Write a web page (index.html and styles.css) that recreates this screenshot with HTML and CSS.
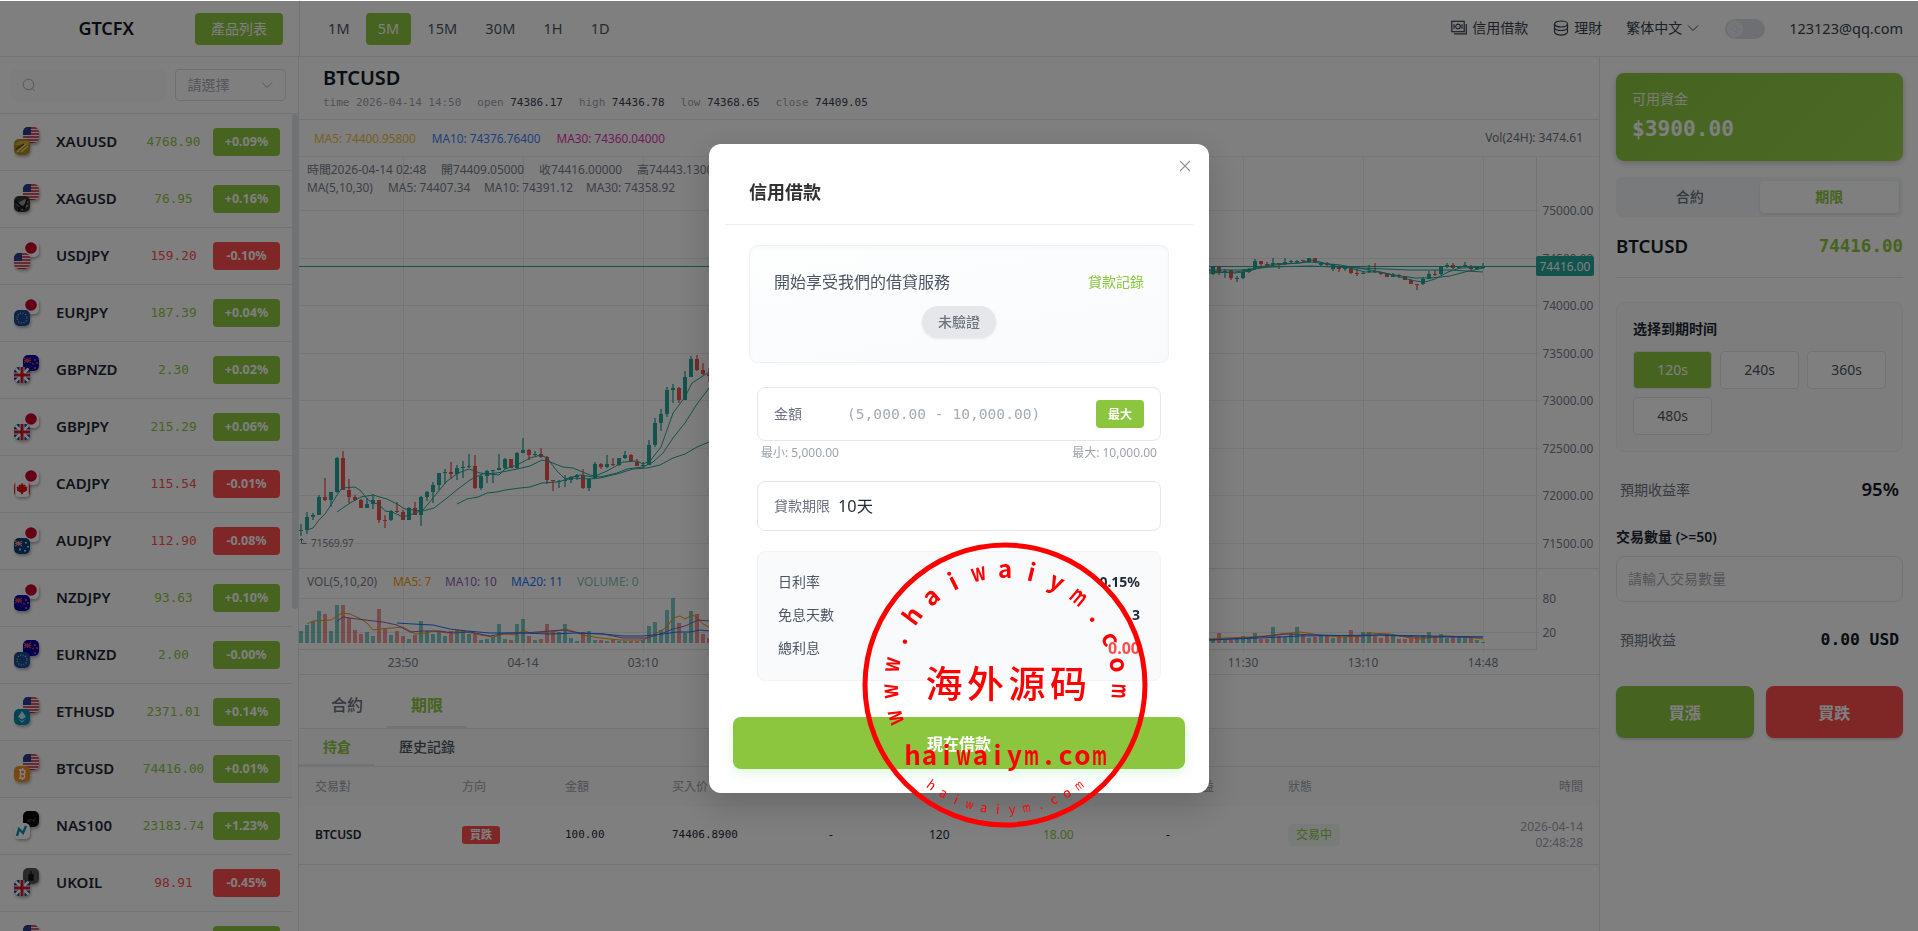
FILE: index.html
```
<!DOCTYPE html>
<html lang="zh-Hant">
<head>
    <meta charset="UTF-8">
    <meta name="viewport" content="width=device-width, initial-scale=1.0">
    <title>GTCFX</title>
    <link rel="stylesheet" href="styles.css">
</head>
<body>
    <svg class="defs" width="0" height="0">
        <symbol id="us" viewBox="0 0 16 16"><rect width="16" height="16" fill="#eee"/><path d="M0 1h16M0 4h16M0 7h16M0 10h16M0 13h16M0 15.6h16" stroke="#c8203c" stroke-width="1.4"/><rect width="8" height="8" fill="#2b3c8c"/></symbol>
        <symbol id="jp" viewBox="0 0 16 16"><rect width="16" height="16" fill="#fff"/><circle cx="8" cy="7" r="5.8" fill="#c8002c"/></symbol>
        <symbol id="eu" viewBox="0 0 16 16"><rect width="16" height="16" fill="#164a9c"/><circle cx="8" cy="8" r="5" fill="none" stroke="#e0cf30" stroke-width="1.1" stroke-dasharray="1 1.62"/></symbol>
        <symbol id="nz" viewBox="0 0 16 16"><rect width="16" height="16" fill="#00009c"/><path d="M1 3l7 5M8 3L1 8M4.5 3v5M1 5.5h7" stroke="#d43a5c" stroke-width="1.2"/><path d="M12 4v2M10 8v1.500M14 7v2M12 12v2" stroke="#e04060" stroke-width="1.6"/></symbol>
        <symbol id="au" viewBox="0 0 16 16"><rect width="16" height="16" fill="#06407c"/><path d="M1 3l7 5M8 3L1 8M4.500 3v5M1 5.500h7" stroke="#e58a9a" stroke-width="1.2"/><path d="M12 4v1.500M14 8v1.500M6 10.500v2M11 12v1.500" stroke="#fff" stroke-width="1.5"/></symbol>
        <symbol id="gb" viewBox="0 0 16 16"><rect width="16" height="16" fill="#0c3284"/><path d="M0 0l16 16M16 0L0 16" stroke="#fff" stroke-width="2.6"/><path d="M8 0v16M0 8h16" stroke="#fff" stroke-width="5"/><path d="M8 0v16M0 8h16" stroke="#d0142c" stroke-width="3"/></symbol>
        <symbol id="ca" viewBox="0 0 16 16"><rect width="16" height="16" fill="#fff"/><path d="M.5 0v16M15.500 0v16" stroke="#d22" stroke-width="1.500"/><path d="M8 2.500l1.500 2 1.500-.500-.300 2.500 2.300-.500-.800 2 .800 1-3.500 2H8.400V13h-.8v-2H6.500L3 9l.8-1-.8-2 2.300.500L5 4l1.500.500z" fill="#e01010" stroke="#e01010"/></symbol>
        <symbol id="gold" viewBox="0 0 16 16"><rect width="16" height="16" fill="#b08a20"/><path d="M0 6l6-4h9v4z" fill="#cfae48"/><path d="M3 13l9-8M7 13l7-6" stroke="#f3e08a" stroke-width="1.2"/><path d="M2 10l8-5" stroke="#5c4300" stroke-width="1.4"/></symbol>
        <symbol id="silver" viewBox="0 0 16 16"><rect width="16" height="16" fill="#333"/><path d="M2 8l9-5 4 3-9 5z" fill="#999"/><path d="M8 14l6-5" stroke="#aaa" stroke-width="1.500"/><path d="M1 5l9 8 3-9M5 11v4" stroke="#111" stroke-width="1.800" fill="none"/></symbol>
        <symbol id="eth" viewBox="0 0 16 16"><rect width="16" height="16" fill="#0b84ad"/><path d="M8 2l4 6-4 2.500L4 8z" fill="#bfeaf5"/><path d="M4 9.400L8 12l4-2.600L8 14z" fill="#8fd6ea"/></symbol>
        <symbol id="btc" viewBox="0 0 16 16"><rect width="16" height="16" fill="#f2901c"/><path d="M6.500 3v10M5 4h4a2 2 0 0 1 0 4H6.500M9 8a2.200 2.200 0 0 1 0 4.300H5M8.500 2v2M8.500 12v2" stroke="#fff" stroke-width="1.500" fill="none"/></symbol>
        <symbol id="nas" viewBox="0 0 16 16"><rect width="16" height="16" fill="#080808"/><path d="M4 9l2 2 2-3 2 2 3-3" stroke="#7c2020" stroke-width="1" fill="none"/><path d="M6 8v3M11 8v3" stroke="#1f6b40" stroke-width="1"/></symbol>
        <symbol id="ndx" viewBox="0 0 16 16"><rect width="16" height="16" fill="#fff"/><path d="M3 13l2-7 4 4 3-7" stroke="#0a8db5" stroke-width="2.400" fill="none"/></symbol>
        <symbol id="oil" viewBox="0 0 16 16"><rect width="16" height="16" fill="#555"/><path d="M8 3v8M6 7h4v5H6z" fill="#111" stroke="#111" stroke-width="1.300"/></symbol>
    </svg>

    <header class="topbar">
        <div class="brand">
            <span class="logo">GTCFX</span>
            <button class="btn-list">產品列表</button>
        </div>
        <nav class="periods">
            <a>1M</a><a class="active">5M</a><a>15M</a><a>30M</a><a>1H</a><a>1D</a>
        </nav>
        <div class="user-menu">
            <a class="link-loan"><svg width="16" height="16" viewBox="0 0 16 16" fill="none" stroke="currentColor" stroke-width="1.200"><rect x=".8" y="1.300" width="12.400" height="10.400"/><circle cx="7" cy="6.500" r="2.300"/><path d="M3 13.900h12.300V4M3 4.200v4.600M11 4.200v4.600"/></svg>信用借款</a>
            <a class="link-fund"><svg width="16" height="16" viewBox="0 0 16 16" fill="none" stroke="currentColor" stroke-width="1.200"><ellipse cx="8" cy="4" rx="6.500" ry="3"/><path d="M1.500 4v3.500c0 1.700 3 3 6.500 3s6.500-1.300 6.500-3V4M1.500 7.500v4.200c0 1.900 3 3.400 6.500 3.400s6.500-1.500 6.500-3.400V7.500"/></svg>理財</a>
            <a class="link-lang">繁体中文<svg width="12" height="12" viewBox="0 0 12 12" fill="none" stroke="currentColor"><path d="M1 3.500l5 5 5-5"/></svg></a>
            <span class="toggle"><i><svg width="12" height="12" viewBox="0 0 12 12" fill="none" stroke="#dcdfe6"><circle cx="6" cy="6" r="2.500"/><path d="M6 0v2M6 10v2M0 6h2M10 6h2M2 2l1 1M9 9l1 1M10 2L9 3M3 9l-1 1"/></svg></i></span>
            <a class="mail">123123@qq.com</a>
        </div>
    </header>

    <div class="layout">
        <aside class="sidebar">
            <div class="filters">
                <div class="search"><svg width="14" height="14" viewBox="0 0 14 14" fill="none" stroke="#a8abb2"><circle cx="6.500" cy="6.500" r="5.300"/><path d="M10.500 10.500l2 2"/></svg></div>
                <div class="select">請選擇<svg width="12" height="12" viewBox="0 0 12 12" fill="none" stroke="#a8abb2"><path d="M1 3.500l5 5 5-5"/></svg></div>
            </div>
            <div class="quotes">
                <div class="rows" id="rows"></div>
                <div class="thumb"></div>
            </div>
        </aside>

        <main class="main">
            <section class="title-box">
                <h1>BTCUSD</h1>
                <p><span>time 2026-04-14 14:50</span><span>open <b>74386.17</b></span><span>high <b>74436.78</b></span><span>low <b>74368.65</b></span><span>close <b>74409.05</b></span></p>
            </section>
            <section class="ma-bar">
                <span class="ma5">MA5: 74400.95800</span>
                <span class="ma10">MA10: 74376.76400</span>
                <span class="ma30">MA30: 74360.04000</span>
                <span class="vol24">Vol(24H): 3474.61</span>
            </section>
            <svg class="chart" id="chart" width="1300" height="517" viewBox="-1 0 1300 517"></svg>
            <section class="orders">
                <div class="tabs"><a>合約</a><a class="active">期限</a></div>
                <div class="subtabs"><a class="active">持倉</a><a>歷史記錄</a></div>
                <table>
                    <colgroup><col class="c1"><col class="c2"><col class="c3"><col class="c4"><col class="c5"><col class="c6"><col class="c7"><col class="c8"><col class="c9"></colgroup>
                    <thead>
                        <tr><th>交易對</th><th>方向</th><th>金額</th><th>买入价</th><th></th><th></th><th></th><th>實際收益</th><th>狀態</th><th class="right">時間</th></tr>
                    </thead>
                    <tbody>
                        <tr>
                            <td class="symbol">BTCUSD</td>
                            <td><span class="tag-sell">買跌</span></td>
                            <td class="num">100.00</td>
                            <td class="num">74406.8900</td>
                            <td>-</td>
                            <td>120</td>
                            <td class="green">18.00</td>
                            <td>-</td>
                            <td><span class="tag-live">交易中</span></td>
                            <td class="right time">2026-04-14<br>02:48:28</td>
                        </tr>
                    </tbody>
                </table>
            </section>
        </main>

        <aside class="trade">
            <div class="balance"><span>可用資金</span><strong>$3900.00</strong></div>
            <div class="switch"><a>合約</a><a class="active">期限</a></div>
            <div class="pair"><span>BTCUSD</span><strong>74416.00</strong></div>
            <div class="expiry">
                <h4>选择到期时间</h4>
                <div class="times"><a class="active">120s</a><a>240s</a><a>360s</a><a>480s</a></div>
            </div>
            <div class="line rate"><span>預期收益率</span><strong>95%</strong></div>
            <h4 class="amount-label">交易數量 (&gt;=50)</h4>
            <div class="amount">請輸入交易數量</div>
            <div class="line profit"><span>預期收益</span><strong>0.00 USD</strong></div>
            <div class="actions"><button class="buy-up">買漲</button><button class="buy-down">買跌</button></div>
        </aside>
    </div>

    <div class="overlay">
        <div class="modal">
            <svg class="close" width="12" height="12" viewBox="0 0 12 12" stroke="#909399" stroke-width="1.100"><path d="M1 1l10 10M11 1L1 11"/></svg>
            <h2>信用借款</h2>
            <div class="intro">
                <div class="intro-top"><span>開始享受我們的借貸服務</span><a>貸款記錄</a></div>
                <span class="pill">未驗證</span>
            </div>
            <div class="field money"><label>金額</label><span class="hint">(5,000.00 - 10,000.00)</span><button>最大</button></div>
            <div class="limits"><span>最小: 5,000.00</span><span>最大: 10,000.00</span></div>
            <div class="field term"><label>貸款期限</label><span>10天</span></div>
            <div class="summary">
                <p><span>日利率</span><b>0.15%</b></p>
                <p><span>免息天數</span><b>3</b></p>
                <p><span>總利息</span><b class="red">0.00</b></p>
            </div>
            <button class="submit">現在借款</button>
        </div>
    </div>

    <svg class="stamp" id="stamp" width="286" height="286" viewBox="-143 -143 286 286">
        <circle r="140" fill="none" stroke="red" stroke-width="5"/>
    </svg>

    <script src="app.js"></script>
</body>
</html>
```
FILE: styles.css
```
* {
    box-sizing: border-box;
}
body {
    margin: 0;
    height: 931px;
    overflow: hidden;
    background: #fff;
    color: #1f2937;
    font-family: "Noto Sans", "Noto Sans CJK TC", sans-serif;
    font-size: 14px;
    line-height: 20px;
}
h1, h2, h4, p {
    margin: 0;
}
button {
    border: 0;
    font-family: inherit;
    color: #fff;
    padding: 0;
}
.defs {
    display: block;
}
/* header */
.topbar {
    display: flex;
    height: 57px;
    border-bottom: 1px solid #e5e7eb;
}
.brand {
    width: 300px;
    border-right: 1px solid #e5e7eb;
    display: flex;
    align-items: center;
    justify-content: flex-end;
    padding: 1px 16px 0 0;
}
.logo {
    font-size: 18px;
    font-weight: 600;
    margin: -2px 61px 0 0;
    color: #111827;
}
.btn-list {
    width: 88px;
    height: 32px;
    border-radius: 4px;
    background: #8cc63f;
    font-size: 14px;
    line-height: 30px;
}
.periods {
    display: flex;
    align-items: center;
    gap: 4px;
    padding: 1px 0 0 16px;
    color: #4b5563;
    font-size: 14.5px;
}
.periods a {
    padding: 5px 12px 7px;
    border-radius: 4px;
    letter-spacing: 0.1px;
}
.periods .active {
    background: #8cc63f;
    color: #fff;
}
.user-menu {
    margin-left: auto;
    padding: 0 15px 0 0;
    display: flex;
    align-items: center;
    color: #374151;
}
.user-menu a {
    display: flex;
    align-items: center;
    gap: 5px;
}
.link-fund {
    margin-left: 25px;
}
.link-lang {
    margin-left: 24px;
}
.toggle {
    width: 40px;
    height: 20px;
    border-radius: 10px;
    background: #dcdfe6;
    margin: 2px 24px 0 26px;
    padding: 2px;
}
.toggle i {
    display: flex;
    width: 16px;
    height: 16px;
    border-radius: 50%;
    background: #eceef2;
    align-items: center;
    justify-content: center;
}
.mail {
    font-size: 14.5px;
}
.layout {
    display: flex;
    height: 874px;
}
/* sidebar */
.sidebar {
    width: 299px;
    border-right: 1px solid #e5e7eb;
}
.filters {
    height: 57px;
    border-bottom: 1px solid #e5e7eb;
    display: flex;
    align-items: center;
    padding: 0 12px 0 11px;
    gap: 8px;
}
.search {
    width: 157px;
    height: 32px;
    background: #f8fbf9;
    border-radius: 6px;
    padding: 9px 11px;
    line-height: 0;
}
.select {
    width: 111px;
    height: 32px;
    border: 1px solid #dcdfe6;
    border-radius: 4px;
    display: flex;
    align-items: center;
    justify-content: space-between;
    padding: 0 12px 0 11px;
    color: #a8abb2;
}
.quotes {
    display: flex;
    height: 817px;
    overflow: hidden;
}
.rows {
    width: 292px;
}
.thumb {
    width: 6px;
    height: 495px;
    border-radius: 3px;
    background: #e3e5e9;
}
.row {
    height: 57px;
    border-bottom: 1px solid #e5e7eb;
    display: grid;
    grid-template-columns: 42px 78px 79px 67px;
    padding-left: 14px;
    align-items: center;
}
.row.active {
    background: #f8fbf9;
}
.coins {
    position: relative;
    width: 28px;
    height: 30px;
}
.coins svg {
    position: absolute;
    border-radius: 5px;
    box-shadow: 1px 2px 3px rgba(0, 0, 0, 0.3);
}
.coins .back {
    left: 9px;
    top: 0;
}
.coins .front {
    left: 0;
    top: 12px;
}
.name {
    margin-top: -2px;
    font-size: 15px;
    font-weight: 600;
}
.price {
    text-align: center;
    font-family: "DejaVu Sans Mono", monospace;
    font-size: 12.8px;
    color: #8cc63f;
}
.price.down {
    color: #ff4d4f;
}
.pct {
    height: 28px;
    border-radius: 4px;
    background: #8cc63f;
    color: #fff;
    font-size: 12.5px;
    font-weight: 700;
    line-height: 27px;
    text-align: center;
}
.pct.down {
    background: #ff4d4f;
}
/* main column */
.main {
    width: 1300px;
}
.title-box {
    height: 63px;
    border-bottom: 1px solid #e5e7eb;
    padding: 9px 0 0 24px;
}
.title-box h1 {
    font-size: 20px;
    line-height: 24px;
    font-weight: 600;
    color: #111827;
}
.title-box p {
    display: flex;
    gap: 16px;
    margin-top: 3px;
    font-family: "DejaVu Sans Mono", monospace;
    font-size: 10.95px;
    color: #9ca3af;
}
.title-box b {
    font-weight: 400;
    color: #374151;
}
.ma-bar {
    height: 37px;
    border-bottom: 1px solid #f0f1f3;
    display: flex;
    align-items: center;
    gap: 16px;
    padding: 0 16px 0 15px;
    font-size: 11.8px;
    color: #6b7280;
}
.ma5 {
    color: #f0c040;
}
.ma10 {
    color: #3b82f6;
}
.ma30 {
    color: #e033b0;
}
.vol24 {
    margin-left: auto;
    font-size: 12px;
}
.chart {
    display: block;
    font-size: 11.9px;
}
.orders {
    border-top: 1px solid #e5e7eb;
}
.tabs {
    height: 54px;
    border-bottom: 1px solid #e5e7eb;
    display: flex;
    padding-left: 8px;
    font-size: 16px;
    font-weight: 500;
    color: #6b7280;
}
.tabs a {
    width: 80px;
    text-align: center;
    line-height: 60px;
}
.tabs .active {
    color: #8cc63f;
    font-weight: 700;
    border-bottom: 2px solid #e5e7eb;
}
.subtabs {
    height: 38px;
    border-bottom: 1px solid #e5e7eb;
    background: #f8fbf9;
    display: flex;
    font-weight: 500;
    color: #4b5563;
}
.subtabs a {
    padding: 0 24px;
    line-height: 36px;
}
.subtabs .active {
    color: #8cc63f;
    font-weight: 700;
    border-bottom: 2px solid #e5e7eb;
}
table {
    width: 1300px;
    table-layout: fixed;
    border-collapse: collapse;
    font-size: 12px;
}
th {
    height: 40px;
    background: #f8fbf9;
    font-weight: 400;
    text-align: left;
    color: #9ca3af;
}
th, td {
    padding: 0;
}
td {
    height: 57px;
    border-bottom: 1px solid #e5e7eb;
    line-height: 16px;
}
th:first-child, td:first-child {
    padding-left: 16px;
}
.c1 { width: 163px; }
.c2 { width: 103px; }
.c3 { width: 107px; }
.c4 { width: 157px; }
.c5 { width: 100px; }
.c6 { width: 114px; }
.c7 { width: 123px; }
.c8 { width: 122px; }
.c9 { width: 140px; }
th.right, td.right {
    text-align: right;
    padding-right: 16px;
}
.symbol {
    font-weight: 600;
}
.num {
    font-family: "DejaVu Sans Mono", monospace;
    font-size: 10.95px;
}
.green {
    color: #8cc63f;
}
.time {
    color: #9ca3af;
}
.tag-sell {
    display: inline-block;
    width: 38px;
    height: 18px;
    border-radius: 3px;
    background: #ff4d4f;
    color: #fff;
    font-size: 11px;
    font-weight: 700;
    line-height: 18px;
    text-align: center;
}
.tag-live {
    display: inline-block;
    padding: 3px 8px;
    border-radius: 4px;
    background: #eff9f3;
    color: #8cc63f;
}
/* right column */
.trade {
    width: 319px;
    border-left: 1px solid #e5e7eb;
    padding: 16px 15px 0 16px;
}
.balance {
    height: 88px;
    border-radius: 8px;
    background: linear-gradient(135deg, #8cc63f, #9ad24c);
    box-shadow: 0 2px 6px rgba(0, 0, 0, 0.2);
    padding: 16px;
    color: #fff;
    display: flex;
    flex-direction: column;
    gap: 10px;
}
.balance strong {
    font-family: "DejaVu Sans Mono", monospace;
    font-size: 21.2px;
}
.balance span {
    opacity: 0.9;
}
.switch {
    margin-top: 16px;
    height: 40px;
    padding: 4px;
    border-radius: 6px;
    background: #f0f4f9;
    display: flex;
    text-align: center;
    line-height: 32px;
    font-weight: 500;
    color: #6b7280;
}
.switch a {
    flex: 1;
}
.switch .active {
    background: #fff;
    color: #8cc63f;
    font-weight: 700;
    border-radius: 4px;
    box-shadow: 0 1px 3px rgba(0, 0, 0, 0.1);
}
.pair {
    height: 61px;
    border-bottom: 1px solid #e5e7eb;
    display: flex;
    justify-content: space-between;
    padding-top: 19px;
    font-size: 18.6px;
    font-weight: 600;
    color: #111827;
}
.pair strong {
    font-family: "DejaVu Sans Mono", monospace;
    font-size: 17.5px;
    color: #8cc63f;
}
.expiry {
    margin-top: 24px;
    height: 150px;
    border: 1px solid #f0f2f4;
    border-radius: 8px;
    background: #f8fbf9;
    padding: 16px;
}
h4 {
    font-size: 14px;
    font-weight: 600;
}
.times {
    display: grid;
    grid-template-columns: repeat(3, 1fr);
    gap: 8px;
    margin-top: 12px;
}
.times a {
    height: 38px;
    border: 1px solid #e5e7eb;
    border-radius: 4px;
    background: #fff;
    text-align: center;
    line-height: 36px;
    color: #4b5563;
}
.times .active {
    background: #8cc63f;
    color: #fff;
}
.line {
    display: flex;
    justify-content: space-between;
    padding: 0 4px;
    color: #6b7280;
}
.line strong {
    color: #111827;
}
.rate {
    margin-top: 28px;
}
.rate strong {
    margin-top: -1px;
    font-size: 18.6px;
    font-weight: 600;
}
.amount-label {
    margin-top: 27px;
}
.amount {
    margin-top: 9px;
    height: 46px;
    border: 1px solid #e5e7eb;
    border-radius: 8px;
    padding-left: 11px;
    line-height: 44px;
    color: #a8abb2;
}
.profit {
    margin-top: 28px;
}
.profit strong {
    font-family: "DejaVu Sans Mono", monospace;
    font-size: 16.3px;
}
.actions {
    margin-top: 36px;
    display: flex;
    gap: 12px;
}
.actions button {
    flex: 1;
    height: 52px;
    border-radius: 8px;
    font-size: 16px;
    font-weight: 700;
    box-shadow: 0 2px 3px rgba(0, 0, 0, 0.15);
}
.buy-up {
    background: #8cc63f;
}
.buy-down {
    background: #ff4d4f;
}
/* loan dialog */
.overlay {
    position: fixed;
    inset: 1px 0 0 0;
    background: rgba(0, 0, 0, 0.5);
}
.modal {
    position: relative;
    width: 500px;
    height: 649px;
    margin: 143px 0 0 709px;
    padding: 16px;
    border-radius: 12px;
    background: #fff;
    box-shadow: 0 12px 32px 4px rgba(0, 0, 0, 0.15);
}
.close {
    position: absolute;
    top: 16px;
    right: 18px;
}
.modal h2 {
    height: 65px;
    border-bottom: 1px solid #ebedf0;
    padding: 20px 0 0 24px;
    font-size: 18px;
    line-height: 24px;
    color: #303133;
}
.intro {
    height: 118px;
    margin: 20px 24px 0;
    padding: 24px 24px 0;
    border: 1px solid #eff1f4;
    border-radius: 8px;
    background: linear-gradient(170deg, #fdfefe, #f9fafc);
    box-shadow: inset 0 2px 4px rgba(0, 0, 0, 0.03);
    text-align: center;
}
.intro-top {
    display: flex;
    justify-content: space-between;
    line-height: 24px;
    font-size: 16px;
    color: #4b5563;
}
.intro-top a {
    font-size: 14px;
    color: #8cc63f;
}
.pill {
    display: inline-block;
    margin-top: 12px;
    padding: 0 16px;
    border-radius: 16px;
    background: #e5e7eb;
    box-shadow: 0 1px 3px rgba(0, 0, 0, 0.08);
    line-height: 32px;
    font-weight: 500;
    color: #6b7280;
}
.field {
    margin: 0 32px;
    border: 1px solid #e5e7eb;
    border-radius: 8px;
    padding: 0 16px;
    display: flex;
    align-items: center;
    color: #6b7280;
}
.money {
    margin-top: 24px;
    height: 54px;
}
.hint {
    margin-left: 45px;
    font-family: "DejaVu Sans Mono", monospace;
    font-size: 14.6px;
    color: #a3abb8;
}
.money button {
    margin-left: auto;
    width: 48px;
    height: 28px;
    border-radius: 4px;
    background: #8cc63f;
    font-size: 12px;
    font-weight: 700;
}
.limits {
    display: flex;
    justify-content: space-between;
    margin: 2px 36px 0;
    font-size: 12px;
    color: #9ca3af;
}
.term {
    margin-top: 18px;
    height: 50px;
}
.term span {
    margin-left: 8px;
    font-size: 16.3px;
    color: #1f2937;
}
.summary {
    height: 130px;
    margin: 20px 32px 0;
    padding: 20px 20px 0;
    border: 1px solid #f1f3f5;
    border-radius: 8px;
    background: #f9fafc;
    color: #4b5563;
}
.summary p {
    display: flex;
    justify-content: space-between;
    margin-bottom: 13px;
}
.summary b {
    font-weight: 700;
    color: #1f2937;
}
.summary .red {
    color: #ff4d4f;
    font-size: 16px;
}
.submit {
    display: block;
    width: 452px;
    height: 52px;
    margin: 36px 0 0 8px;
    border-radius: 8px;
    background: #8cc63f;
    box-shadow: 0 4px 12px rgba(140, 230, 150, 0.3);
    font-size: 16px;
    font-weight: 700;
}
/* round site seal, over everything */
.stamp {
    position: fixed;
    left: 861.5px;
    top: 541.5px;
    font-family: "Noto Sans CJK SC", sans-serif;
    fill: red;
}
```
FILE: app.js
```
// name, price, change, down?, back icon, front icon
const quotes = [
    ["XAUUSD", "4768.90", "+0.09%", 0, "us", "gold"],
    ["XAGUSD", "76.95", "+0.16%", 0, "us", "silver"],
    ["USDJPY", "159.20", "-0.10%", 1, "jp", "us"],
    ["EURJPY", "187.39", "+0.04%", 0, "jp", "eu"],
    ["GBPNZD", "2.30", "+0.02%", 0, "nz", "gb"],
    ["GBPJPY", "215.29", "+0.06%", 0, "jp", "gb"],
    ["CADJPY", "115.54", "-0.01%", 1, "jp", "ca"],
    ["AUDJPY", "112.90", "-0.08%", 1, "jp", "au"],
    ["NZDJPY", "93.63", "+0.10%", 0, "jp", "nz"],
    ["EURNZD", "2.00", "-0.00%", 0, "nz", "eu"],
    ["ETHUSD", "2371.01", "+0.14%", 0, "us", "eth"],
    ["BTCUSD", "74416.00", "+0.01%", 0, "us", "btc"],
    ["NAS100", "23183.74", "+1.23%", 0, "nas", "ndx"],
    ["UKOIL", "98.91", "-0.45%", 1, "oil", "gb"],
    ["", "", "", 0, "us", "eu"]
];
document.getElementById("rows").innerHTML = quotes.map(q => {
    const down = q[3] ? " down" : "";
    return `<div class="row${q[0] === "BTCUSD" ? " active" : ""}">
        <div class="coins"><svg class="back" width="16" height="16"><use href="#${q[4]}"/></svg><svg class="front" width="16" height="16"><use href="#${q[5]}"/></svg></div>
        <div class="name">${q[0]}</div><div class="price${down}">${q[1]}</div><div class="pct${down}">${q[2]}</div></div>`;
}).join("");

// candles: high, body top, body bottom, low, down?, volume
const left = [
    [367,373,374,379,0,12],[355,360,373,377,0,18],[356,358,360,363,0,22],[338,340,358,358,0,32],[321,340,343,344,1,29],
    [335,335,343,350,0,12],[300,301,335,336,0,38],[294,301,333,333,1,38],[322,333,340,346,1,25],[338,340,343,344,1,13],
    [342,343,351,351,1,9],[341,347,351,351,0,11],[337,343,347,352,0,7],[343,343,363,366,1,34],[358,363,364,371,1,15],
    [353,354,363,364,0,8],[345,354,355,356,1,12],[353,355,363,363,1,7],[350,351,363,363,0,4],[345,351,358,358,1,8],
    [339,340,358,369,0,22],[334,335,340,344,0,12],[325,328,335,346,0,9],[316,316,328,333,0,12],[312,315,316,327,0,7],
    [305,315,317,322,1,12],[308,311,317,323,0,13],[304,310,311,321,0,12],[297,309,310,311,0,9],[298,309,331,332,1,9],
    [317,319,331,333,0,3],[313,314,319,326,0,4],[313,313,314,326,0,6],[297,311,313,313,0,19],[301,302,311,312,0,4],
    [302,302,311,311,1,3],[295,296,311,312,0,19],[281,293,296,296,0,24],[292,293,298,303,1,7],[294,297,298,299,0,3],
    [291,297,300,301,1,4],[299,300,323,327,1,19],[323,323,324,334,1,13],[323,324,325,331,0,11],[318,323,324,330,0,19],
    [319,320,323,326,0,5],[317,318,320,323,0,2],[312,318,331,332,1,11],[321,322,331,334,0,12],[305,307,322,322,0,3],
    [306,307,310,312,1,3],[298,307,310,311,0,2],[301,307,308,309,1,3],[301,301,308,309,0,2],[294,298,301,302,0,2],
    [297,298,304,305,1,2],[302,305,309,309,1,2],[305,308,309,311,0,3],[283,288,308,308,0,17],[261,266,288,290,0,21],
    [252,257,266,274,0,13],[230,233,257,260,0,33],[227,231,233,246,0,45],[230,231,243,246,1,20],[214,220,243,243,0,10],
    [199,202,220,220,0,32],[198,202,213,214,1,29],[206,213,217,218,1,9],[211,217,219,225,1,5]
];
const right = [
    [109,109,117,118,0,3],[110,110,116,118,1,10],[112,114,115,121,0,3],[113,113,121,123,1,3],[119,121,122,125,0,5],
    [113,115,121,122,0,7],[111,112,115,116,0,4],[102,104,112,113,0,10],[104,104,107,109,1,4],[105,107,108,109,1,4],
    [101,106,107,109,0,16],[106,106,107,112,1,7],[101,105,107,108,0,6],[103,104,105,107,0,10],[103,104,105,106,0,16],
    [103,103,104,105,1,9],[101,101,105,106,0,5],[101,101,105,106,1,6],[105,106,108,110,0,8],[105,106,108,110,1,7],
    [107,107,112,114,0,5],[108,110,112,115,1,7],[110,110,112,114,0,6],[109,111,116,117,1,13],[112,116,117,119,1,7],
    [115,116,117,117,0,11],[108,114,115,116,0,11],[106,114,115,116,1,7],[115,115,117,118,1,5],[116,116,120,120,1,9],
    [116,118,120,120,0,8],[117,118,119,121,1,4],[119,119,123,123,1,4],[122,123,127,127,1,5],[127,127,128,133,1,6],
    [120,122,127,128,0,8],[114,117,122,122,0,11],[113,117,118,119,1,7],[109,110,117,118,0,9],[106,108,109,111,0,5],
    [106,108,111,112,1,6],[109,110,111,112,0,6],[105,108,109,110,0,6],[108,109,112,114,1,5],[109,110,112,113,0,3],[106,110,111,112,0,1]
];
const lines = [
    ["#26a69a", "7,373 13,371 19,363 25,357 31,348 37,338 42,331 55,330 61,334 67,342 73,346 79,347 85,354 92,355 103,360 115,356 123,353 133,341 146,325 158,316 169,312 180,316 199,318 205,312 217,308 230,301 241,298 247,301 257,314 265,322 280,318 293,320 307,314 323,305 337,304 343,307 350,304 361,290 373,256 385,240 392,226 403,219 409,215"],
    ["#26a69a", "37,355 50,346 61,340 73,338 87,342 97,347 105,352 123,354 134,351 147,341 158,332 170,323 182,317 197,316 217,312 230,309 242,303 250,305 263,310 273,311 290,318 300,320 317,316 327,312 343,310 353,305 363,296 373,281 385,266 397,247 409,231"],
    ["#26a69a", "157,347 167,342 178,340 187,336 197,335 205,333 220,331 230,330 242,326 257,325 273,321 290,322 300,321 317,317 333,312 347,311 360,308 373,301 385,297 397,290 409,285"],
    ["#26a69a", "909,114 935,116 950,114 960,110 975,107 1000,106 1011,103 1020,105 1035,109 1050,111 1065,115 1080,115 1100,120 1115,124 1125,125 1135,122 1148,115 1160,111 1183,110"],
    ["#26a69a", "909,116 935,115 955,112 975,108 1010,105 1040,108 1070,113 1095,118 1115,121 1130,121 1150,119 1165,115 1183,111"],
    ["#26a69a", "909,113 940,113 970,110 1010,109 1060,111 1110,113 1150,113 1183,115"],
    ["#ff9600", "7,467 13,464 31,463 42,456 50,457 61,462 67,466 73,473 80,472 103,470 115,477 127,476 133,474 147,476 160,474 172,476 180,478 193,480 203,477 217,478 223,473 230,476 253,475 265,472 273,474 283,478 300,481 320,483 343,483 353,478 362,473 367,470 373,461 380,459 385,462 392,458 397,460 403,467 409,470"],
    ["#935ebd", "37,464 43,460 57,462 83,465 97,468 110,475 123,474 140,474 153,476 170,475 190,479 207,476 223,476 250,474 263,473 280,476 303,477 323,481 347,481 363,476 373,472 385,469 398,463 409,464"],
    ["#1677ff", "97,466 113,467 133,468 150,472 167,474 190,476 223,476 250,477 277,476 303,477 323,479 343,479 363,477 377,475 390,475 400,473 409,474"],
    ["#ff9600", "909,482 925,481 950,480 965,479 980,477 1000,475 1020,478 1040,480 1060,479 1070,476 1090,477 1105,480 1120,482 1145,479 1165,480 1183,482"],
    ["#935ebd", "909,483 945,481 970,479 985,477 1020,478 1060,479 1080,478 1120,480 1183,480"],
    ["#1677ff", "909,483 960,481 1000,479 1080,478 1130,479 1183,480"]
];

let s = "";
// grid
[53, 101, 148, 196, 243, 291, 338, 386, 441, 475].forEach(y => s += `<path d="M-1 ${y}.5H1239" stroke="#ededed"/>`);
[103, 223, 343, 463, 583, 703, 823, 943, 1063, 1183].forEach(x => s += `<path d="M${x}.5 0V496" stroke="#ededed"/>`);
s += `<path d="M-1 411.5H1299M-1 492.5H1236.5V0" fill="none" stroke="#e6e6e8"/>`;

function candles(list, start) {
    list.forEach((c, i) => {
        const x = start + i * 6, color = c[4] ? "#ef5350" : "#26a69a";
        s += `<rect x="${x}" y="${486 - c[5]}" width="4" height="${c[5]}" fill="${color}" opacity=".6"/>`;
        s += `<rect x="${x + 1}" y="${c[0]}" width="2" height="${c[3] - c[0]}" fill="${color}" opacity=".65"/>`;
        s += `<rect x="${x}" y="${c[1]}" width="4" height="${c[2] - c[1]}" fill="${color}"/>`;
    });
}
candles(left, -1);
candles(right, 911);
lines.forEach(l => s += `<polyline points="${l[1]}" fill="none" stroke="${l[0]}"/>`);

function label(x, y, t, fill, anchor) {
    s += `<text x="${x}" y="${y}" fill="${fill || "#76808f"}" text-anchor="${anchor || "start"}">${t}</text>`;
}
[[53, 75000], [101, 74500], [148, 74000], [196, 73500], [243, 73000], [291, 72500], [338, 72000], [386, 71500]]
    .forEach(a => label(1242.5, a[0] + 5, a[1] + ".00"));
label(1242.5, 446, "80");
label(1242.5, 480, "20");
["23:50", "04-14", "03:10", "04:50", "06:30", "08:10", "09:50", "11:30", "13:10", "14:48"]
    .forEach((t, i) => label(103 + i * 120, 510, t, "", "middle"));
[[7, "時間2026-04-14 02:48"], [141, "開74409.05000"], [239, "收74416.00000"], [337, "高74443.13000"]].forEach(a => label(a[0], 17, a[1]));
[[7, "MA(5,10,30)"], [88, "MA5: 74407.34"], [184, "MA10: 74391.12"], [286, "MA30: 74358.92"]].forEach(a => label(a[0], 35, a[1]));
label(7, 429, "VOL(5,10,20)");
label(93, 429, "MA5: 7", "#ff9600");
label(145, 429, "MA10: 10", "#935ebd");
label(211, 429, "MA20: 11", "#1677ff");
label(277, 429, "VOLUME: 0", "#7fc4bc");
s += `<path d="M6.5 386.5H1.5V381.5M-.5 383.5L1.5 381.5L3.5 383.5" fill="none" stroke="#76808f"/>`;
s += `<text x="11" y="390" font-size="10" fill="#76808f">71569.97</text>`;
// last price
s += `<path d="M-1 109.5H1236" stroke="#26a69a"/><rect x="1236" y="99" width="58" height="20" rx="2" fill="#26a69a"/>`;
label(1239.5, 114, "74416.00", "#fff");
document.getElementById("chart").innerHTML = s;

// seal lettering, one glyph at a time
const stamp = document.getElementById("stamp");
let t = "";
function glyph(ch, size, weight, wide, transform) {
    const fit = "wm".includes(ch) ? ` textLength="${wide}" lengthAdjust="spacingAndGlyphs"` : "";
    return `<text text-anchor="middle" font-size="${size}" font-weight="${weight}"${fit} transform="${transform}">${ch}</text>`;
}
[..."www.haiwaiym.com"].forEach((ch, i) => t += glyph(ch, 24, 700, 15, `rotate(${(i - 8) * 13.3}) translate(0 -107)`));
[..."haiwaiym.com"].forEach((ch, i) => t += glyph(ch, 13, 400, 8, `rotate(${(5.5 - i) * 6.6}) translate(0 129)`));
[..."haiwaiym.com"].forEach((ch, i) => t += glyph(ch, 26, 700, 15, `translate(${-92.5 + i * 17} 80)`));
[..."海外源码"].forEach((ch, i) => t += glyph(ch, 37, 500, 0, `translate(${-61 + i * 41.5} 13)`));
stamp.innerHTML += t;
```
